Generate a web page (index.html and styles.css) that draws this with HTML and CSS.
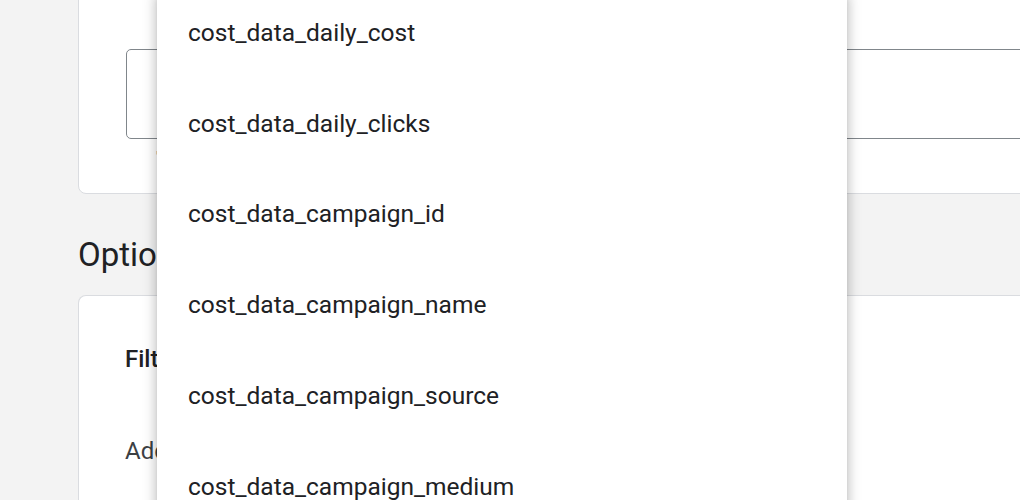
FILE: index.html
```html
<!DOCTYPE html>
<html>
<head>
<meta charset="utf-8">
<link rel="stylesheet" href="styles.css">
</head>
<body>
<div class="page">
  <section class="card card-top">
    <div class="field"></div>
    <div class="hint">'</div>
  </section>
  <h2 class="section-title">Options</h2>
  <section class="card card-options">
    <div class="opt-title">Filters</div>
    <div class="opt-text">Add filter</div>
  </section>
</div>
<div class="menu">
  <ul class="menu-list">
    <li class="menu-item">cost_data_daily_cost</li>
    <li class="menu-item">cost_data_daily_clicks</li>
    <li class="menu-item">cost_data_campaign_id</li>
    <li class="menu-item">cost_data_campaign_name</li>
    <li class="menu-item">cost_data_campaign_source</li>
    <li class="menu-item">cost_data_campaign_medium</li>
  </ul>
</div>
</body>
</html>
```

FILE: styles.css
```css
html, body {
  margin: 0;
  padding: 0;
  height: 500px;
  overflow: hidden;
}
body {
  background: #f3f3f3;
  font-family: Roboto, "Liberation Sans", sans-serif;
  color: #202124;
  position: relative;
}
.page {
  padding-left: 78px;
  width: 1100px;
}
.card {
  background: #fff;
  border: 1px solid #dadce0;
  border-radius: 8px;
  box-sizing: border-box;
}
.card-top {
  margin-top: -40px;
  height: 234px;
  padding: 88px 0 0 47px;
}
.field {
  height: 90px;
  box-sizing: border-box;
  border: 1px solid #80868b;
  border-radius: 5px;
}
.hint {
  margin: 10px 0 0 30px;
  font-size: 14px;
  line-height: 16px;
  color: #80868b;
}
.section-title {
  margin: 0;
  padding-top: 44px;
  height: 68px;
  box-sizing: border-box;
  font-size: 33px;
  font-weight: 400;
  line-height: 34px;
  color: #202124;
}
.card-options {
  margin-top: 33px;
  height: 260px;
  padding: 49px 0 0 46px;
  border-bottom: none;
}
.opt-title {
  font-size: 24px;
  font-weight: 500;
  line-height: 28px;
  height: 28px;
}
.opt-text {
  margin-top: 64px;
  font-size: 24px;
  line-height: 28px;
  color: #3c4043;
}
.menu {
  position: absolute;
  left: 157px;
  top: -10px;
  width: 690px;
  height: 530px;
  background: #fff;
  box-shadow: 0 5px 5px -3px rgba(0,0,0,0.2), 0 8px 10px 1px rgba(0,0,0,0.14), 0 3px 14px 2px rgba(0,0,0,0.12);
  overflow: hidden;
}
.menu-list {
  list-style: none;
  margin: -3px 0 0 0;
  padding: 0;
}
.menu-item {
  height: 90.75px;
  display: flex;
  align-items: center;
  padding-left: 31px;
  font-size: 24.5px;
  color: #202124;
}
```
